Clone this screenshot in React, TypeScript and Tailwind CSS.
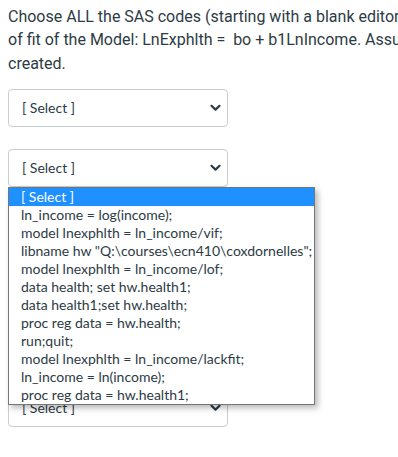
import React from "react";

const options = [
  "[ Select ]",
  "ln_income = log(income);",
  "model lnexphlth = ln_income/vif;",
  'libname hw "Q:\\courses\\ecn410\\coxdornelles";',
  "model lnexphlth = ln_income/lof;",
  "data health; set hw.health1;",
  "data health1;set hw.health;",
  "proc reg data = hw.health;",
  "run;quit;",
  "model lnexphlth = ln_income/lackfit;",
  "ln_income = ln(income);",
  "proc reg data = hw.health1;",
];

function Chevron() {
  return (
    <svg width="11" height="8" viewBox="0 0 11 8" className="shrink-0">
      <path d="M1.5 1.8 L5.5 5.6 L9.5 1.8" fill="none" stroke="#2d3b45" strokeWidth="2.2" strokeLinecap="round" strokeLinejoin="round" />
    </svg>
  );
}

function SelectBox() {
  return (
    <div className="flex h-[38px] w-[220px] items-center justify-between rounded-[4px] border border-[#c7cdd1] bg-white pl-[13px] pr-[6px]">
      <span className="text-[14px] text-[#2d3b45]" style={{ fontFamily: "Lato, 'Open Sans', sans-serif" }}>[ Select ]</span>
      <Chevron />
    </div>
  );
}

export default function App() {
  return (
    <div className="relative h-[457px] w-[398px] overflow-hidden bg-white">
      <div className="px-2 pt-[5px]">
        <p className="whitespace-nowrap text-[16px] leading-[23.3px] text-[#2d3b45]" style={{ fontFamily: "Roboto, 'Liberation Sans', sans-serif" }}>
          Choose ALL the SAS codes (starting with a blank editor) that are needed to test the lack
          <br />
          of fit of the Model: LnExphlth =&nbsp; bo + b1LnIncome. Assume that the data set health1 has been
          <br />
          created.
        </p>
        <div className="mt-[14px] flex flex-col gap-[22px]">
          <SelectBox />
          <SelectBox />
          <SelectBox />
          <SelectBox />
          <SelectBox />
          <SelectBox />
        </div>
      </div>
      <div
        className="absolute left-[8px] top-[187px] w-[307px] border border-[#767676] bg-white shadow-[3px_3px_6px_rgba(0,0,0,0.28)]"
        style={{ fontFamily: "Lato, 'Open Sans', sans-serif" }}
      >
        {options.map((o, i) => (
          <div
            key={i}
            className={
              "h-[18px] whitespace-nowrap pl-[12px] text-[14px] leading-[18px] " +
              (i === 0 ? "bg-[#1e90ff] text-white" : "text-[#2d3b45]")
            }
          >
            {o}
          </div>
        ))}
      </div>
    </div>
  );
}
